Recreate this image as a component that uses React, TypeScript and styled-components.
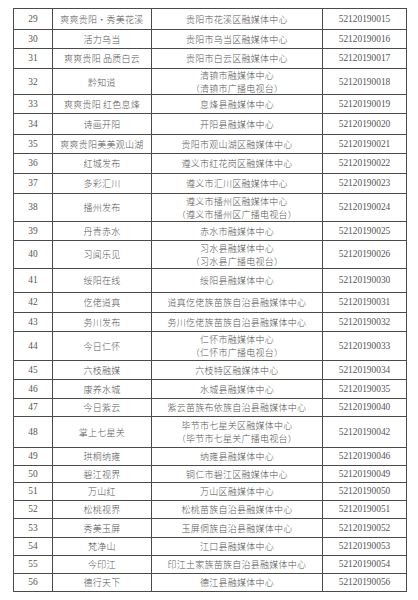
import styled, { createGlobalStyle } from 'styled-components';

type Entry = { no: number; name: string; org: string[]; code: string; h: number };

const rows: Entry[] = [
  { no: 29, name: '爽爽贵阳·秀美花溪', org: ['贵阳市花溪区融媒体中心'], code: '52120190015', h: 21 },
  { no: 30, name: '活力乌当', org: ['贵阳市乌当区融媒体中心'], code: '52120190016', h: 19 },
  { no: 31, name: '爽爽贵阳 品质白云', org: ['贵阳市白云区融媒体中心'], code: '52120190017', h: 20 },
  { no: 32, name: '黔知道', org: ['清镇市融媒体中心', '（清镇市广播电视台）'], code: '52120190018', h: 26 },
  { no: 33, name: '爽爽贵阳 红色息烽', org: ['息烽县融媒体中心'], code: '52120190019', h: 19 },
  { no: 34, name: '诗画开阳', org: ['开阳县融媒体中心'], code: '52120190020', h: 21 },
  { no: 35, name: '爽爽贵阳美美观山湖', org: ['贵阳市观山湖区融媒体中心'], code: '52120190021', h: 19 },
  { no: 36, name: '红城发布', org: ['遵义市红花岗区融媒体中心'], code: '52120190022', h: 20 },
  { no: 37, name: '多彩汇川', org: ['遵义市汇川区融媒体中心'], code: '52120190023', h: 20 },
  { no: 38, name: '播州发布', org: ['遵义市播州区融媒体中心', '（遵义市播州区广播电视台）'], code: '52120190024', h: 28 },
  { no: 39, name: '丹青赤水', org: ['赤水市融媒体中心'], code: '52120190025', h: 19 },
  { no: 40, name: '习闻乐见', org: ['习水县融媒体中心', '（习水县广播电视台）'], code: '52120190026', h: 28 },
  { no: 41, name: '绥阳在线', org: ['绥阳县融媒体中心'], code: '52120190030', h: 24 },
  { no: 42, name: '仡佬道真', org: ['道真仡佬族苗族自治县融媒体中心'], code: '52120190031', h: 20 },
  { no: 43, name: '务川发布', org: ['务川仡佬族苗族自治县融媒体中心'], code: '52120190032', h: 19 },
  { no: 44, name: '今日仁怀', org: ['仁怀市融媒体中心', '（仁怀市广播电视台）'], code: '52120190033', h: 29 },
  { no: 45, name: '六枝融媒', org: ['六枝特区融媒体中心'], code: '52120190034', h: 19 },
  { no: 46, name: '康养水城', org: ['水城县融媒体中心'], code: '52120190035', h: 19 },
  { no: 47, name: '今日紫云', org: ['紫云苗族布依族自治县融媒体中心'], code: '52120190040', h: 18 },
  { no: 48, name: '掌上七星关', org: ['毕节市七星关区融媒体中心', '（毕节市七星关广播电视台）'], code: '52120190042', h: 31 },
  { no: 49, name: '珙桐纳雍', org: ['纳雍县融媒体中心'], code: '52120190046', h: 18 },
  { no: 50, name: '碧江视界', org: ['铜仁市碧江区融媒体中心'], code: '52120190049', h: 17 },
  { no: 51, name: '万山红', org: ['万山区融媒体中心'], code: '52120190050', h: 18 },
  { no: 52, name: '松桃视界', org: ['松桃苗族自治县融媒体中心'], code: '52120190051', h: 18 },
  { no: 53, name: '秀美玉屏', org: ['玉屏侗族自治县融媒体中心'], code: '52120190052', h: 19 },
  { no: 54, name: '梵净山', org: ['江口县融媒体中心'], code: '52120190053', h: 18 },
  { no: 55, name: '今印江', org: ['印江土家族苗族自治县融媒体中心'], code: '52120190054', h: 18 },
  { no: 56, name: '德行天下', org: ['德江县融媒体中心'], code: '52120190056', h: 18 },
];

const GlobalStyle = createGlobalStyle`
  html, body { margin: 0; padding: 0; background: #fff; }
  * { box-sizing: border-box; }
`;

const Page = styled.div` padding: 8px 0 9px 13px; background: #fff; `;
const Table = styled.div`
  width: 394px; border: 1px solid #4a4a4a; border-bottom: none;
  font-family: "Liberation Serif", "Noto Sans CJK SC", serif; color: #555;
`;
const Row = styled.div<{ $h: number }>`
  display: grid; grid-template-columns: 39px 99px 171px 83px;
  height: ${(p) => p.$h}px; border-bottom: 1px solid #4a4a4a;
`;
const Cell = styled.div<{ $num?: boolean }>`
  display: flex; flex-direction: column; align-items: center; justify-content: center;
  border-right: 1px solid #4a4a4a; text-align: center; white-space: nowrap;
  font-family: ${(p) => (p.$num ? '"Liberation Serif", serif' : '"Noto Sans CJK SC", "Liberation Serif", sans-serif')};
  font-size: ${(p) => (p.$num ? '9.4px' : '9px')};
  font-weight: ${(p) => (p.$num ? 400 : 300)};
  letter-spacing: ${(p) => (p.$num ? '0' : '0.25px')};
  line-height: 13px;
  &:last-child { border-right: none; }
`;

export default function App() {
  return (
    <Page>
      <GlobalStyle />
      <Table>
        {rows.map((r) => (
          <Row key={r.no} $h={r.h}>
            <Cell $num>{r.no}</Cell>
            <Cell>{r.name}</Cell>
            <Cell>
              {r.org.map((line) => (
                <span key={line}>{line}</span>
              ))}
            </Cell>
            <Cell $num>{r.code}</Cell>
          </Row>
        ))}
      </Table>
    </Page>
  );
}
